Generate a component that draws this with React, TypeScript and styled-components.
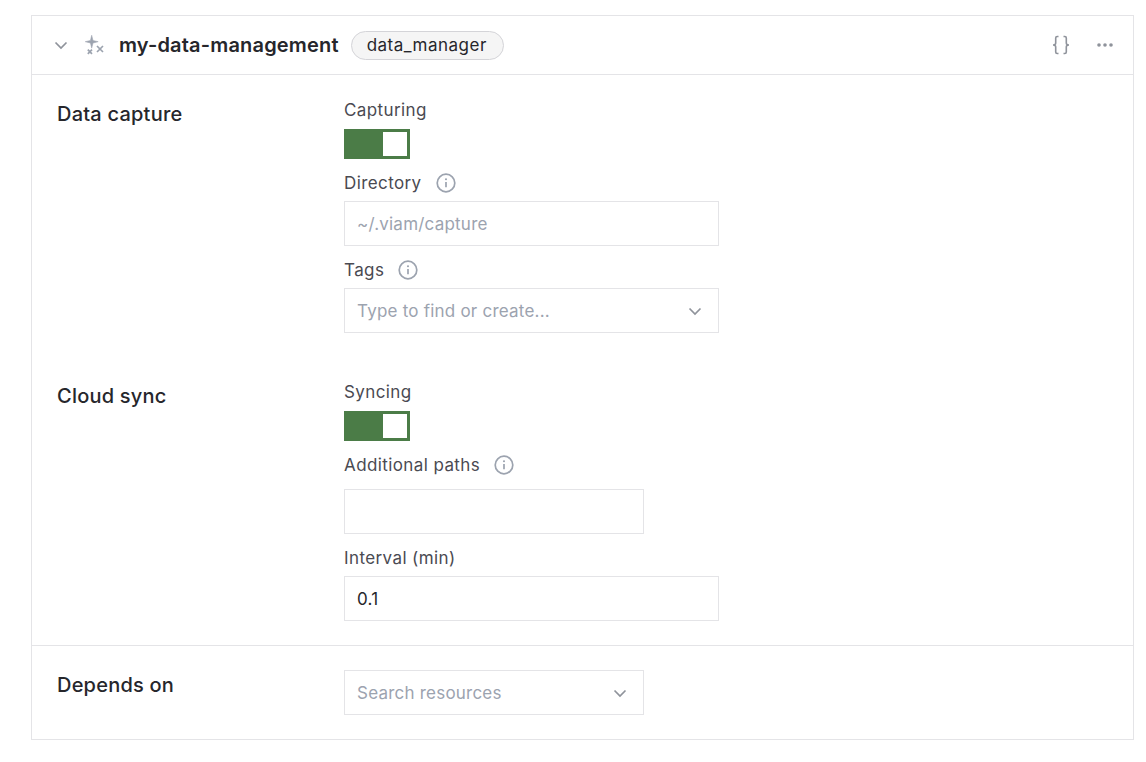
import React from 'react';
import styled, { createGlobalStyle } from 'styled-components';

const Global = createGlobalStyle`
  html, body { margin: 0; padding: 0; background: #fff; }
  body { font-family: Inter, "Liberation Sans", sans-serif; color: #26262b; }
  * { box-sizing: border-box; }
`;
const Page = styled.div`padding: 15px 12px 0 31px;`;
const Card = styled.section`border: 1px solid #e4e4e7; background: #fff;`;
const Header = styled.header`
  height: 59px; display: flex; align-items: center; padding: 0 19px 0 19px;
  border-bottom: 1px solid #e4e4e7;
`;
const IconSlot = styled.span<{ $w: number; $ml?: number }>`
  display: inline-flex; align-items: center; justify-content: center;
  width: ${p => p.$w}px; margin-left: ${p => p.$ml ?? 0}px; flex: none; color: #9ca3af;
`;
const Title = styled.h2`
  margin: 0 0 0 13px; font-size: 20px; font-weight: 600; line-height: 28px; letter-spacing: 0.17px; color: #26262b;
`;
const Pill = styled.span`
  margin-left: 12px; height: 29px; padding: 0 16px 0 15px; display: inline-flex; align-items: center;
  border: 1px solid #d4d4d8; border-radius: 15px; background: #f5f5f5;
  font-size: 17px; letter-spacing: 0.5px; color: #26262b;
`;
const Spacer = styled.div`flex: 1;`;
const Section = styled.div<{ $ruled?: boolean }>`
  display: grid; grid-template-columns: 288px 1fr; padding: 24px; row-gap: 48px;
  ${p => p.$ruled ? 'border-top: 1px solid #e4e4e7;' : ''}
`;
const Heading = styled.h3`
  margin: 0; padding-left: 1px; font-size: 20px; font-weight: 500; line-height: 30px; letter-spacing: 0.22px; color: #26262b;
`;
const Fields = styled.div`display: flex; flex-direction: column; gap: 12px;`;
const Field = styled.div<{ $gap?: number }>`
  display: flex; flex-direction: column; gap: ${p => p.$gap ?? 6}px; align-items: flex-start;
`;
const ToggleField = styled(Field)`
  margin-top: -1px; gap: 7px;
`;
const Label = styled.label`
  display: flex; align-items: center; gap: 14px; height: 24px;
  font-size: 17px; letter-spacing: 0.4px; color: #4a4a52; line-height: 24px;
`;
const Toggle = styled.div`
  width: 66px; height: 30px; background: #4b7c47; padding: 3px 3px 3px 39px; display: flex;
`;
const Knob = styled.div`flex: 1; background: #fff;`;
const Box = styled.div<{ $w: number }>`
  width: ${p => p.$w}px; height: 45px; border: 1px solid #e4e4e7; padding: 0 13px 0 12px;
  display: flex; align-items: center; justify-content: space-between;
  font-size: 17px; letter-spacing: 0.22px; background: #fff;
`;
const Placeholder = styled.span`color: #9ca3af;`;
const Value = styled.span`color: #26262b;`;

const Chevron = ({ size = 20 }: { size?: number }) => (
  <svg width={size} height={size} viewBox="0 0 20 20" fill="none" stroke="#8f939b" strokeWidth="1.7">
    <path d="M4.5 7.5l5.5 5.5 5.5-5.5" />
  </svg>
);
const Info = () => (
  <svg width="20" height="20" viewBox="0 0 20 20" fill="none" stroke="#9ca3af">
    <circle cx="10" cy="10" r="8.8" strokeWidth="1.7" />
    <path d="M10 9v5.2" strokeWidth="1.7" />
    <circle cx="10" cy="6.2" r="1.05" fill="#9ca3af" stroke="none" />
  </svg>
);
const Sparkle = () => (
  <svg width="24" height="24" viewBox="0 0 24 24" fill="#9ca3af" stroke="#9ca3af">
    <path d="M9.7 2.2l1.3 5.2 5.2 1.3-5.2 1.3-1.3 5.2-1.3-5.2-5.2-1.3 5.2-1.3z" stroke="#9ca3af" strokeWidth="0.5" />
    <path d="M5.8 16.7l4.2 4.2M10 16.7l-4.2 4.2M15 13l6 6M21 13l-6 6" fill="none" strokeWidth="1.7" />
  </svg>
);
const Braces = () => (
  <svg width="20" height="20" viewBox="0 0 20 20" fill="none" stroke="#8f939b" strokeWidth="1.6">
    <path d="M7.5 1.5H6.2c-1 0-1.5.5-1.5 1.5v5c0 1-1 2-2.7 2 1.7 0 2.7 1 2.7 2v5c0 1 .5 1.5 1.5 1.5h1.3" />
    <path d="M12.5 1.5h1.3c1 0 1.5.5 1.5 1.5v5c0 1 1 2 2.7 2-1.7 0-2.7 1-2.7 2v5c0 1-.5 1.5-1.5 1.5h-1.3" />
  </svg>
);
const Dots = () => (
  <svg width="18" height="6" viewBox="0 0 18 6" fill="#8f939b">
    <circle cx="3" cy="3" r="1.8" /><circle cx="9" cy="3" r="1.8" /><circle cx="15" cy="3" r="1.8" />
  </svg>
);

export default function App() {
  return (
    <>
      <Global />
      <Page>
        <Card>
          <Header>
            <IconSlot $w={20}><Chevron /></IconSlot>
            <IconSlot $w={24} $ml={11}><Sparkle /></IconSlot>
            <Title>my-data-management</Title>
            <Pill>data_manager</Pill>
            <Spacer />
            <IconSlot $w={20}><Braces /></IconSlot>
            <IconSlot $w={18} $ml={25}><Dots /></IconSlot>
          </Header>
          <Section>
            <Heading>Data capture</Heading>
            <Fields>
              <ToggleField><Label>Capturing</Label><Toggle><Knob /></Toggle></ToggleField>
              <Field><Label>Directory <Info /></Label><Box $w={375}><Placeholder>~/.viam/capture</Placeholder></Box></Field>
              <Field><Label>Tags <Info /></Label><Box $w={375}><Placeholder>Type to find or create...</Placeholder><Chevron /></Box></Field>
            </Fields>
            <Heading>Cloud sync</Heading>
            <Fields>
              <ToggleField><Label>Syncing</Label><Toggle><Knob /></Toggle></ToggleField>
              <Field $gap={12}><Label>Additional paths <Info /></Label><Box $w={300} /></Field>
              <Field><Label>Interval (min)</Label><Box $w={375}><Value>0.1</Value></Box></Field>
            </Fields>
          </Section>
          <Section $ruled>
            <Heading>Depends on</Heading>
            <Box $w={300}><Placeholder>Search resources</Placeholder><Chevron /></Box>
          </Section>
        </Card>
      </Page>
    </>
  );
}
